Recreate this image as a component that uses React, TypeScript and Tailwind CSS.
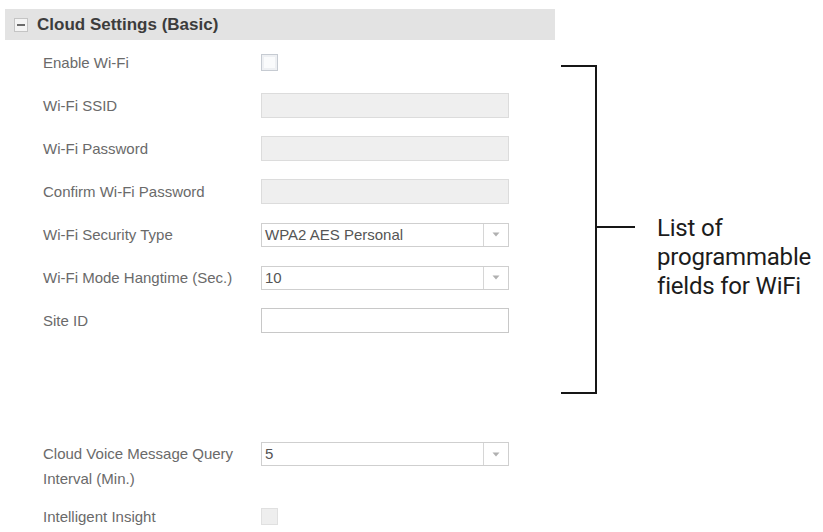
import React from 'react';

const Label = ({ children }: { children: React.ReactNode }) => (
  <div className="w-[200px] text-[15px] leading-[25px] text-[#6a6a6a]">{children}</div>
);

const TextBox = ({ disabled }: { disabled?: boolean }) => (
  <div
    className={
      disabled
        ? 'w-[248px] h-[25px] border border-[#dcdcdc] bg-[#efefef]'
        : 'w-[248px] h-[25px] border border-[#c8c8c8] bg-white'
    }
  />
);

const Select = ({ value }: { value: string }) => (
  <div className="w-[248px] h-[24px] border border-[#cfcfcf] bg-white flex items-stretch">
    <div className="flex-1 px-[3px] text-[15px] leading-[22px] text-[#555]">{value}</div>
    <div className="w-[25px] border-l border-[#d6d6d6] flex items-center justify-center">
      <svg width="8" height="5" viewBox="0 0 8 5">
        <path d="M0.5 0.5 L7.5 0.5 L4 4.5 Z" fill="#b0b0b0" />
      </svg>
    </div>
  </div>
);

const Checkbox = ({ disabled }: { disabled?: boolean }) => (
  <div
    className={
      disabled
        ? 'w-[17px] h-[17px] border border-[#e0e0e0] bg-[#eeeeee]'
        : 'w-[17px] h-[17px] border border-[#c6cbd2] bg-[#fafbfc] shadow-[inset_0_0_0_2px_#eef0f3]'
    }
  />
);

const Row = ({ label, children }: { label: string; children: React.ReactNode }) => (
  <div className="h-[43px] flex items-center pl-[43px]">
    <div className="w-[218px]">
      <Label>{label}</Label>
    </div>
    {children}
  </div>
);

export default function App() {
  return (
    <div className="w-[823px] h-[532px] overflow-hidden bg-white flex font-['Liberation_Sans',Arial,sans-serif]">
      {/* settings panel */}
      <div className="w-[561px] shrink-0 pt-[9px]">
        <div className="ml-[5px] w-[550px] h-[31px] bg-[#e3e3e3] flex items-center">
          <div className="ml-[9px] w-[14px] h-[14px] border border-[#c4c4c4] bg-[#f4f4f4] flex items-center justify-center">
            <div className="w-[8px] h-[2px] bg-[#6a6a6a]" />
          </div>
          <span className="ml-[9px] text-[17px] font-bold text-[#3c3c3c]">Cloud Settings (Basic)</span>
        </div>

        <div className="pt-[1px]">
          <Row label="Enable Wi-Fi">
            <Checkbox />
          </Row>
          <Row label="Wi-Fi SSID">
            <TextBox disabled />
          </Row>
          <Row label="Wi-Fi Password">
            <TextBox disabled />
          </Row>
          <Row label="Confirm Wi-Fi Password">
            <TextBox disabled />
          </Row>
          <Row label="Wi-Fi Security Type">
            <Select value="WPA2 AES Personal" />
          </Row>
          <Row label="Wi-Fi Mode Hangtime (Sec.)">
            <Select value="10" />
          </Row>
          <Row label="Site ID">
            <TextBox />
          </Row>
        </div>

        <div className="mt-[100px] flex items-start pl-[43px]">
          <div className="w-[218px] -mt-[1px]">
            <Label>Cloud Voice Message Query Interval (Min.)</Label>
          </div>
          <Select value="5" />
        </div>

        <div className="mt-[4px]">
          <Row label="Intelligent Insight">
            <Checkbox disabled />
          </Row>
        </div>
      </div>

      {/* annotation */}
      <div className="pt-[65px] flex items-start">
        <svg width="76" height="330" viewBox="0 0 76 330" className="shrink-0">
          <path d="M0 1 H35 V328 H0 M35 162 H74" fill="none" stroke="#161616" strokeWidth="2" />
        </svg>
        <div className="ml-[20px] mt-[149px] font-['Roboto',sans-serif] text-[24px] leading-[29px] text-[#1c1c1c] tracking-[-0.2px]">
          List of
          <br />
          programmable
          <br />
          fields for WiFi
        </div>
      </div>
    </div>
  );
}
